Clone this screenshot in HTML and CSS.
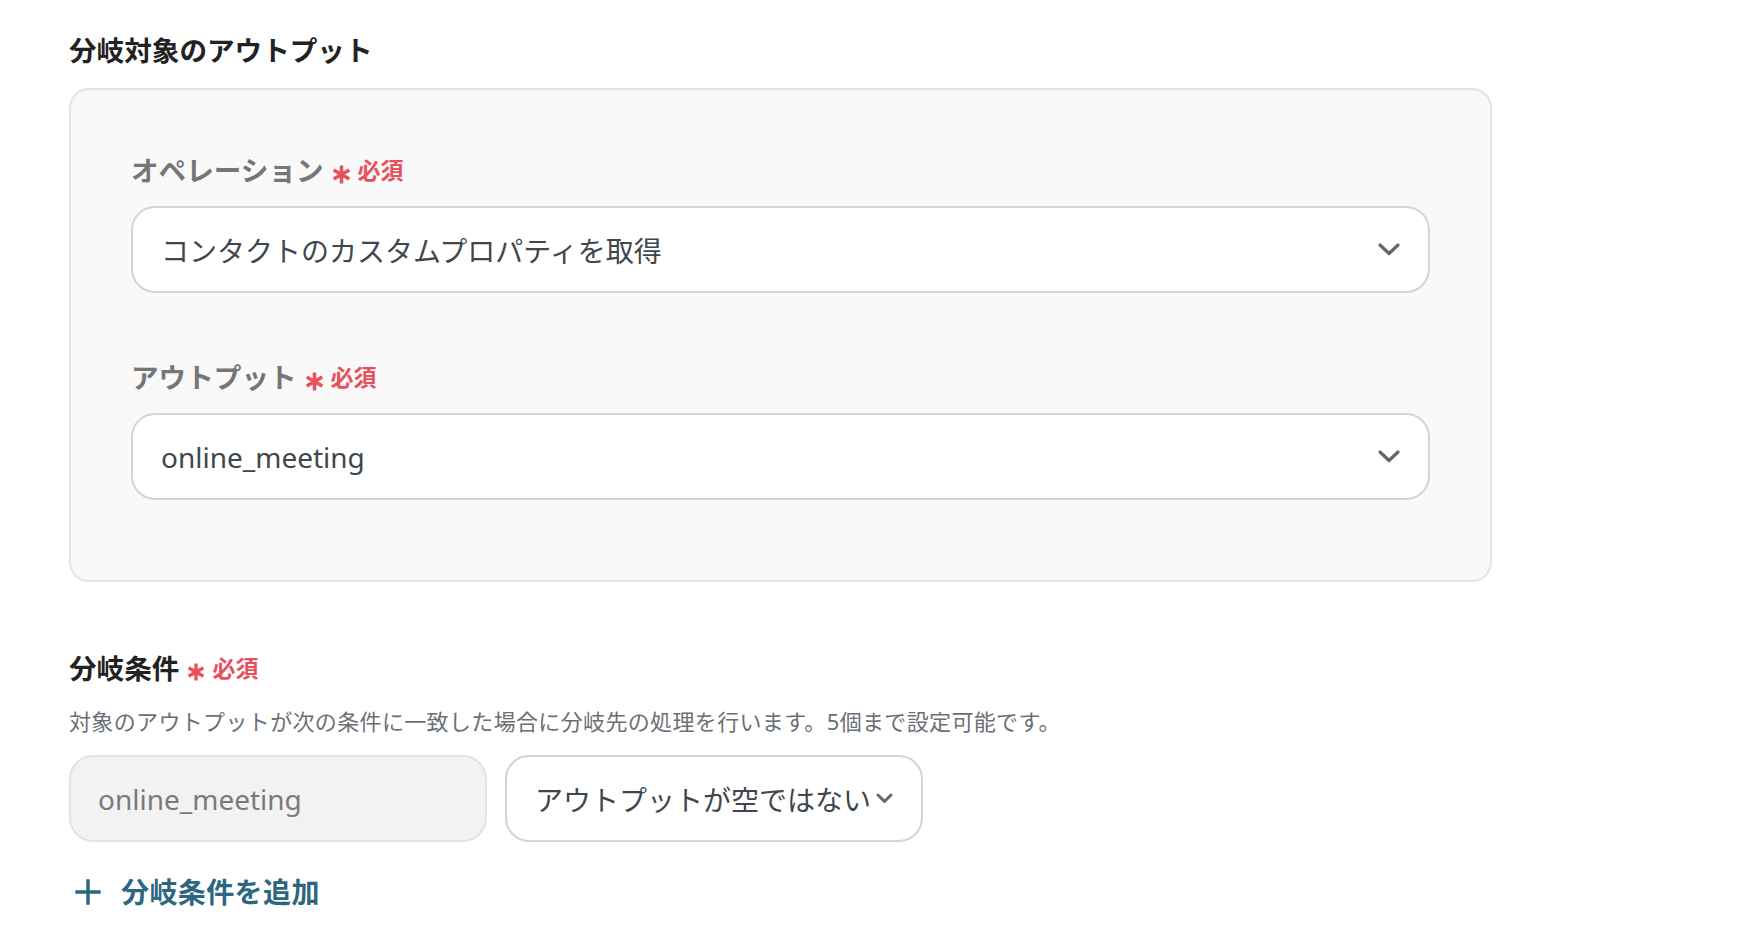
FILE: index.html
```html
<!DOCTYPE html>
<html lang="ja">
<head>
    <meta charset="UTF-8">
    <meta name="viewport" content="width=device-width, initial-scale=1.0">
    <title>分岐設定</title>
    <link rel="stylesheet" href="styles.css">
</head>
<body>
    <h2 class="section-title">分岐対象のアウトプット</h2>

    <div class="panel">
        <div class="field">
            <label class="field-label">オペレーション<svg class="req-mark" width="19" height="19" viewBox="0 0 18 18"><path d="M9 0.5 V17.5 M1.6 4.75 L16.4 13.25 M1.6 13.25 L16.4 4.75" stroke="#e8505b" stroke-width="3.3"/></svg><span class="req">必須</span></label>
            <div class="select">
                <span>コンタクトのカスタムプロパティを取得</span>
                <svg class="chevron" width="22" height="13" viewBox="0 0 22 13"><path d="M2 2 L11 10.5 L20 2" fill="none" stroke="#666" stroke-width="3.2" stroke-linecap="round" stroke-linejoin="round"/></svg>
            </div>
        </div>

        <div class="field">
            <label class="field-label">アウトプット<svg class="req-mark" width="19" height="19" viewBox="0 0 18 18"><path d="M9 0.5 V17.5 M1.6 4.75 L16.4 13.25 M1.6 13.25 L16.4 4.75" stroke="#e8505b" stroke-width="3.3"/></svg><span class="req">必須</span></label>
            <div class="select">
                <span>online_meeting</span>
                <svg class="chevron" width="22" height="13" viewBox="0 0 22 13"><path d="M2 2 L11 10.5 L20 2" fill="none" stroke="#666" stroke-width="3.2" stroke-linecap="round" stroke-linejoin="round"/></svg>
            </div>
        </div>
    </div>

    <div class="conditions">
        <h2 class="section-title">分岐条件<svg class="req-mark" width="18" height="18" viewBox="0 0 18 18"><path d="M9 0.5 V17.5 M1.6 4.75 L16.4 13.25 M1.6 13.25 L16.4 4.75" stroke="#e8505b" stroke-width="3.3"/></svg><span class="req">必須</span></h2>
        <p class="hint">対象のアウトプットが次の条件に一致した場合に分岐先の処理を行います。5個まで設定可能です。</p>

        <div class="cond-row">
            <div class="box disabled">online_meeting</div>
            <div class="box select small">
                <span>アウトプットが空ではない</span>
                <svg class="chevron" width="17" height="11" viewBox="0 0 17 11"><path d="M2 2 L8.5 8.5 L15 2" fill="none" stroke="#666" stroke-width="3" stroke-linecap="round" stroke-linejoin="round"/></svg>
            </div>
        </div>

        <a class="add-link" href="#">
            <svg width="26" height="26" viewBox="0 0 26 26"><path d="M13 2 V24 M2 13 H24" stroke="#2c6680" stroke-width="3.4" stroke-linecap="square"/></svg>
            <span>分岐条件を追加</span>
        </a>
    </div>
</body>
</html>
```

FILE: styles.css
```css
body {
    font-family: "Noto Sans", "Noto Sans CJK JP", sans-serif;
    margin: 0;
    padding: 32px 0 0 69px;
    background-color: #ffffff;
    color: #222;
}
.section-title {
    font-size: 27.6px;
    line-height: 36px;
    font-weight: bold;
    color: #222;
    margin: 0 0 20px;
    display: flex;
    align-items: center;
}
.panel {
    width: 1423px;
    box-sizing: border-box;
    background-color: #f9f9f9;
    border: 2px solid #e4e4e4;
    border-radius: 20px;
    padding: 62px 60px 80px;
}
.field + .field {
    margin-top: 66px;
}
.field-label {
    display: flex;
    align-items: center;
    font-size: 27.6px;
    line-height: 36px;
    font-weight: bold;
    color: #767676;
    margin-bottom: 18px;
}
.req-mark {
    flex-shrink: 0;
    margin-left: 8px;
    position: relative;
    top: 4px;
}
.req {
    color: #e8505b;
    font-size: 23px;
    font-weight: bold;
    margin-left: 7px;
}
.select {
    display: flex;
    align-items: center;
    justify-content: space-between;
    height: 87px;
    box-sizing: border-box;
    background-color: #ffffff;
    border: 2px solid #d0d5db;
    border-radius: 24px;
    padding: 0 28px 0 28px;
    font-size: 28px;
    color: #41464d;
}
.chevron {
    flex-shrink: 0;
}
.conditions {
    margin-top: 68px;
}
.conditions .section-title {
    margin: 0;
}
.hint {
    margin: 19px 0 0;
    font-size: 22px;
    letter-spacing: 0.35px;
    line-height: 32px;
    color: #6b6f75;
}
.cond-row {
    display: flex;
    gap: 18px;
    margin-top: 18px;
}
.box {
    width: 418px;
    height: 87px;
    box-sizing: border-box;
    border-radius: 24px;
    font-size: 28px;
    display: flex;
    align-items: center;
}
.box.disabled {
    background-color: #f2f2f2;
    border: 2px solid #e3e3e3;
    color: #7a7a7a;
    padding: 0 27px;
}
.box.small {
    padding: 0 28px 0 28px;
}
.add-link {
    display: inline-flex;
    align-items: center;
    gap: 20px;
    margin-top: 32px;
    margin-left: 6px;
    font-size: 28px;
    line-height: 36px;
    letter-spacing: 0.4px;
    font-weight: bold;
    color: #2c6680;
    text-decoration: none;
}
```
